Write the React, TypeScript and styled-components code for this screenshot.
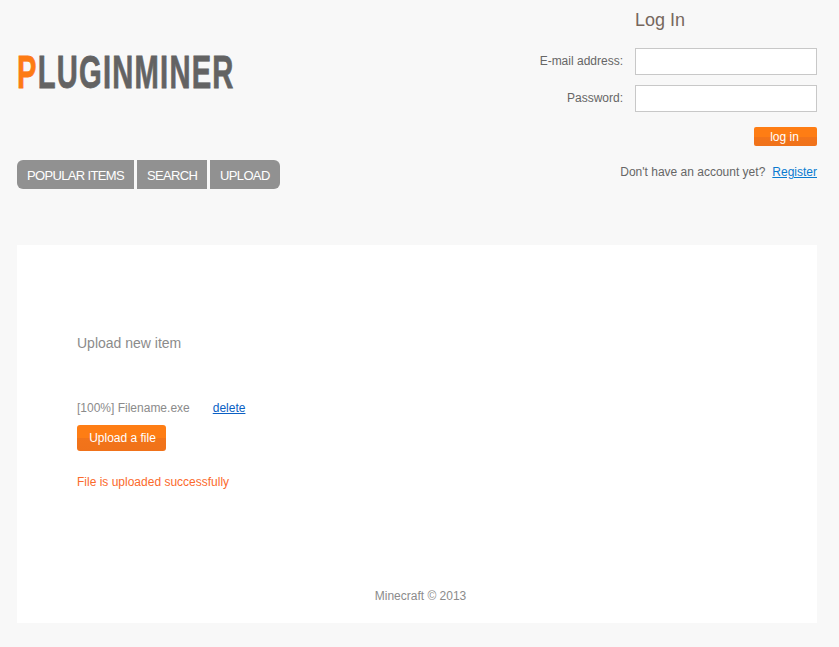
import styled, { createGlobalStyle } from "styled-components";

const GlobalStyle = createGlobalStyle`
  html, body {
    margin: 0;
    padding: 0;
    background: #f8f8f8;
    font-family: "Liberation Sans", Arial, sans-serif;
    overflow: hidden;
  }
`;

const Page = styled.div`
  width: 800px;
  height: 647px;
  padding: 0 22px 0 17px;
  display: flex;
  flex-direction: column;
`;

const Header = styled.header`
  height: 245px;
  display: flex;
  justify-content: space-between;
  align-items: flex-start;
`;

const Brand = styled.div`
  display: flex;
  flex-direction: column;
  padding-top: 44px;
`;

const Logo = styled.div`
  height: 116px;
  font-size: 47px;
  line-height: 56px;
  font-weight: 700;
  letter-spacing: 2px;
  color: #636363;
  -webkit-text-stroke: 0.8px currentColor;
  white-space: nowrap;
  transform: scaleX(0.62);
  transform-origin: left top;
`;

const LogoMark = styled.span`
  color: #fd7b14;
`;

const Nav = styled.nav`
  display: flex;
  gap: 3px;
`;

const NavItem = styled.a<{ $first?: boolean; $last?: boolean }>`
  box-sizing: border-box;
  height: 29px;
  padding: 1px 10px 0;
  display: flex;
  align-items: center;
  background: #919191;
  color: #fff;
  font-size: 13px;
  letter-spacing: -0.66px;
  white-space: nowrap;
  border-radius: ${({ $first, $last }) =>
    $first ? "6px 0 0 6px" : $last ? "0 6px 6px 0" : "0"};
`;

const LoginBox = styled.form`
  width: 277px;
  display: flex;
  flex-direction: column;
`;

const LoginTitle = styled.h2`
  margin: 9px 0 0 95px;
  font-size: 18px;
  line-height: 22px;
  font-weight: 400;
  color: #76675d;
`;

const Field = styled.label`
  display: flex;
  justify-content: flex-end;
  align-items: center;
  gap: 12px;
  margin-top: 10px;
  font-size: 12px;
  color: #666;
  white-space: nowrap;

  &:first-of-type {
    margin-top: 17px;
  }
`;

const FieldLabel = styled.span`
  padding-bottom: 2px;
`;

const Input = styled.input`
  box-sizing: border-box;
  width: 182px;
  height: 27px;
  border: 1px solid #c8c8c8;
  background: #fff;
`;

const SubmitRow = styled.div`
  display: flex;
  justify-content: flex-end;
  margin-top: 15px;
`;

const OrangeButton = styled.button`
  border: 0;
  padding: 0;
  color: #fff;
  font-family: inherit;
  background: linear-gradient(#fe7d14 0%, #fe7d14 50%, #f2741a 50%, #f0721a 100%);
`;

const LoginButton = styled(OrangeButton)`
  width: 63px;
  height: 19px;
  padding-right: 2px;
  font-size: 12px;
  border-radius: 2px;
`;

const RegisterLine = styled.p`
  margin: 19px 0 0;
  font-size: 12px;
  line-height: 14px;
  text-align: right;
  color: #666;
`;

const RegisterLink = styled.a`
  margin-left: 7px;
  color: #0a7bd0;
  text-decoration: underline;
`;

const Card = styled.main`
  height: 378px;
  background: #fff;
  padding: 0 60px;
  display: flex;
  flex-direction: column;
`;

const CardTitle = styled.h1`
  margin: 90px 0 0;
  font-size: 14px;
  line-height: 16px;
  font-weight: 400;
  color: #8b8b8b;
`;

const FileRow = styled.div`
  margin-top: 50px;
  display: flex;
  gap: 23px;
  font-size: 12px;
  line-height: 14px;
  color: #8b8b8b;
`;

const DeleteLink = styled.a`
  color: #0a5fc4;
  text-decoration: underline;
`;

const UploadButton = styled(OrangeButton)`
  margin-top: 10px;
  width: 89px;
  height: 26px;
  padding-left: 2px;
  font-size: 12px;
  border-radius: 3px;
`;

const Status = styled.p`
  margin: 24px 0 0;
  font-size: 12px;
  line-height: 14px;
  color: #fb6a2c;
`;

const Footer = styled.footer`
  margin-top: auto;
  padding: 0 0 20px 7px;
  font-size: 12px;
  line-height: 14px;
  text-align: center;
  color: #8b8b8b;
`;

export default function App() {
  return (
    <>
      <GlobalStyle />
      <Page>
        <Header>
          <Brand>
            <Logo>
              <LogoMark>P</LogoMark>LUGINMINER
            </Logo>
            <Nav>
              <NavItem $first>POPULAR ITEMS</NavItem>
              <NavItem>SEARCH</NavItem>
              <NavItem $last>UPLOAD</NavItem>
            </Nav>
          </Brand>
          <LoginBox>
            <LoginTitle>Log In</LoginTitle>
            <Field>
              <FieldLabel>E-mail address:</FieldLabel>
              <Input type="text" />
            </Field>
            <Field>
              <FieldLabel>Password:</FieldLabel>
              <Input type="password" />
            </Field>
            <SubmitRow>
              <LoginButton type="button">log in</LoginButton>
            </SubmitRow>
            <RegisterLine>
              Don't have an account yet?
              <RegisterLink>Register</RegisterLink>
            </RegisterLine>
          </LoginBox>
        </Header>
        <Card>
          <CardTitle>Upload new item</CardTitle>
          <FileRow>
            <span>[100%] Filename.exe</span>
            <DeleteLink>delete</DeleteLink>
          </FileRow>
          <div>
            <UploadButton type="button">Upload a file</UploadButton>
          </div>
          <Status>File is uploaded successfully</Status>
          <Footer>Minecraft © 2013</Footer>
        </Card>
      </Page>
    </>
  );
}
